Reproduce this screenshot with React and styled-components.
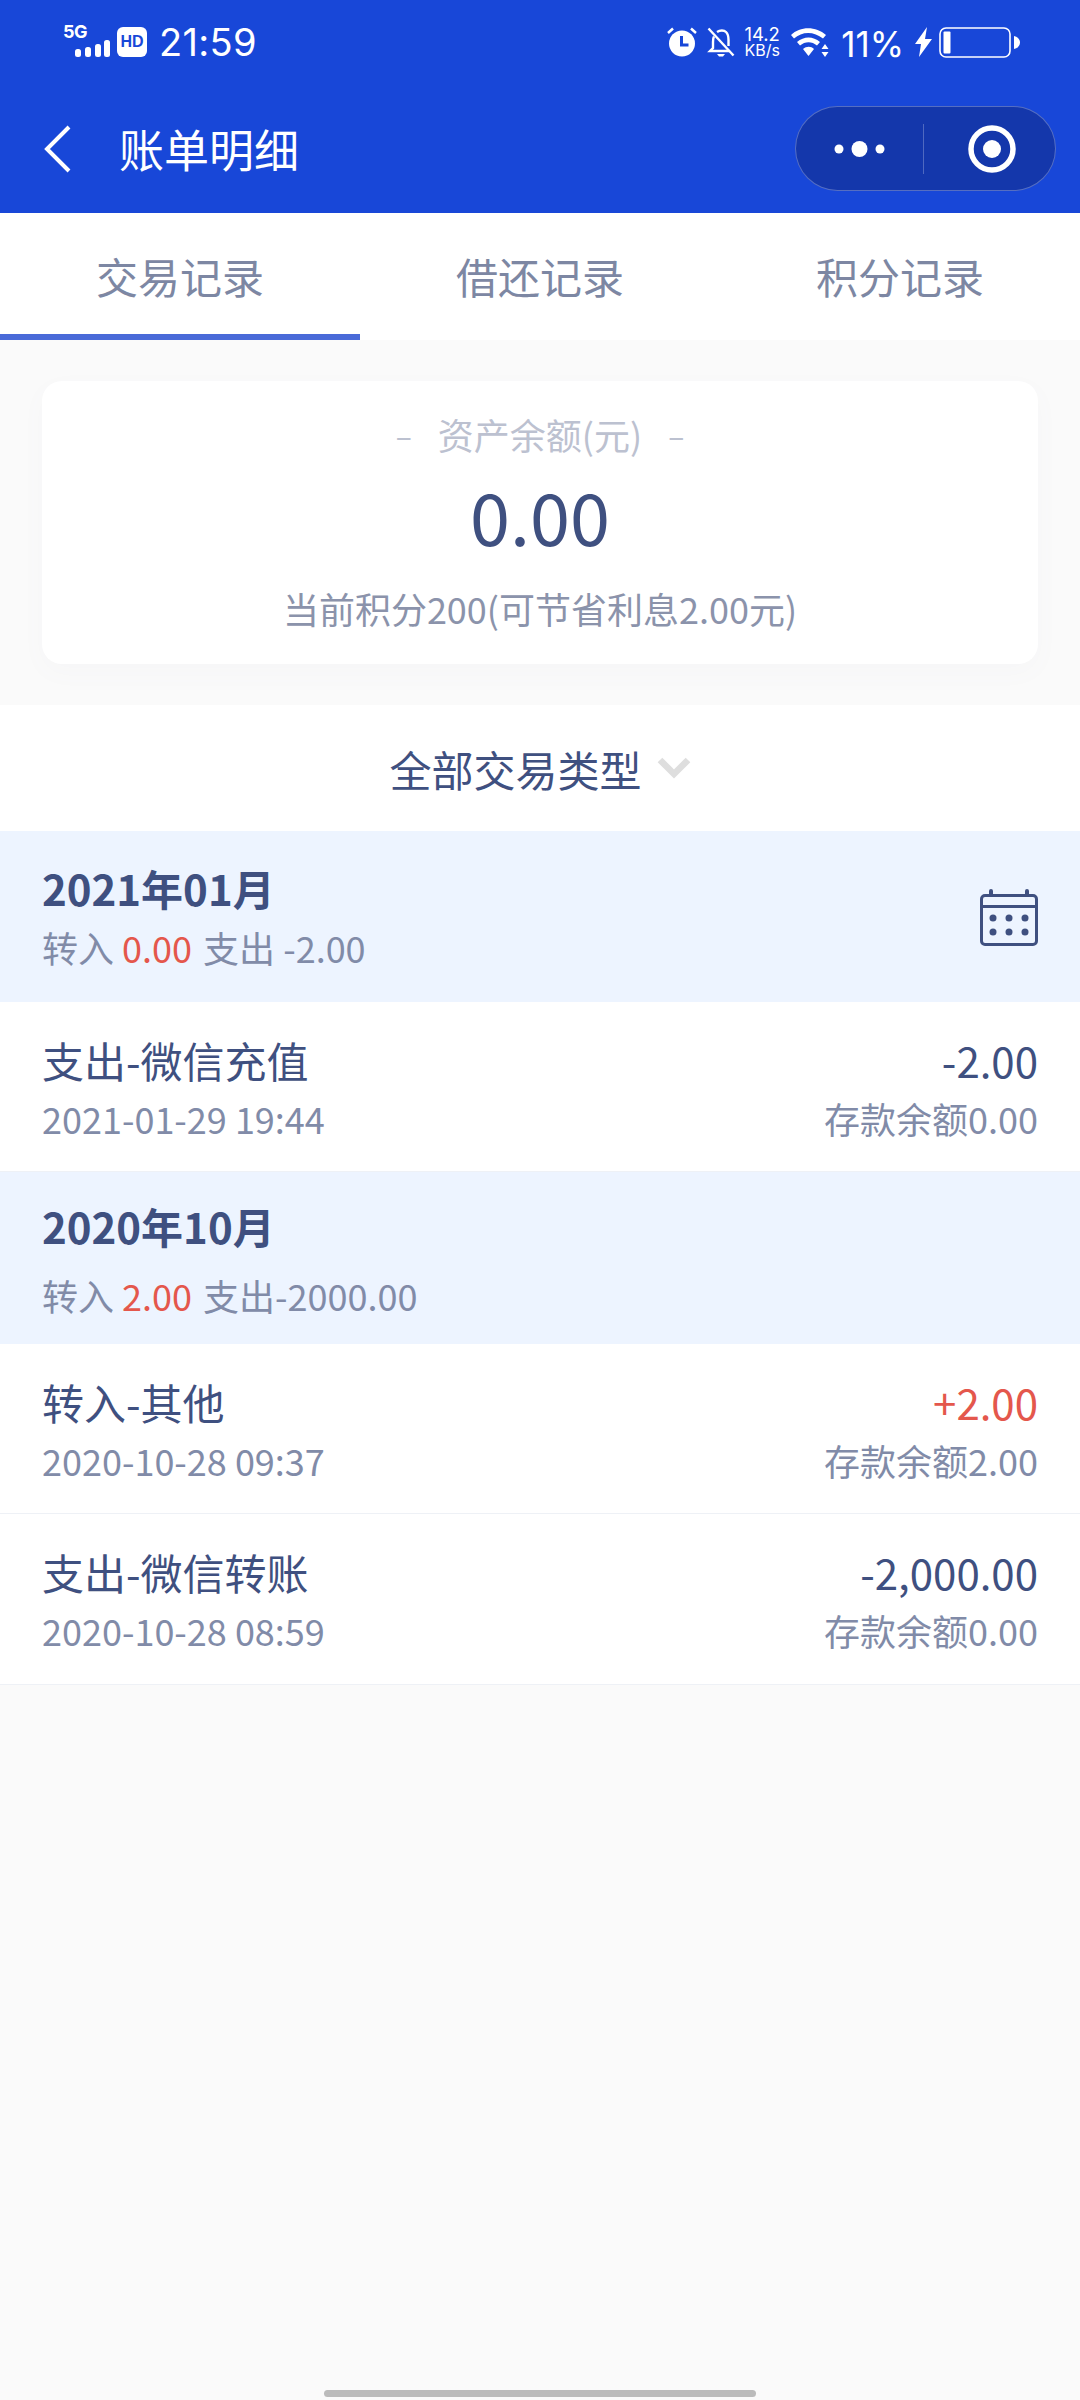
import React from "react";
import styled, { createGlobalStyle } from "styled-components";

const Global = createGlobalStyle`
  html, body { margin: 0; padding: 0; background: #fafafa; }
  body { font-family: "Noto Sans CJK SC", "Noto Sans", sans-serif; }
  * { box-sizing: border-box; }
`;

const Page = styled.div`
  width: 1080px;
  height: 2400px;
  display: flex;
  flex-direction: column;
  background: #fafafa;
  position: relative;
  overflow: hidden;
`;

const Header = styled.header`
  height: 213px;
  background: #1847d8;
  color: #fff;
  display: flex;
  flex-direction: column;
`;

const StatusBar = styled.div`
  height: 84px;
  padding: 27px 60px 0 63px;
  display: flex;
  justify-content: space-between;
  align-items: flex-start;
`;

const StatusGroup = styled.div`
  display: flex;
  align-items: flex-start;
`;

const Time = styled.span`
  font-family: Inter, sans-serif;
  font-size: 38px;
  line-height: 36px;
  margin: -3px 0 0 12px;
  letter-spacing: 0.3px;
`;

const Signal = styled.div`
  position: relative;
  width: 48px;
  height: 32px;
`;

const FiveG = styled.span`
  position: absolute;
  left: 0;
  top: -5px;
  font-family: Inter, sans-serif;
  font-weight: 700;
  font-size: 18px;
  letter-spacing: -0.5px;
  line-height: 20px;
`;

const HdBadge = styled.span`
  width: 30px;
  height: 30px;
  margin: 0 0 0 6px;
  border-radius: 6px;
  background: #fff;
  color: #1847d8;
  display: flex;
  align-items: center;
  justify-content: center;
  font-family: "Liberation Sans", sans-serif;
  font-weight: 700;
  font-size: 16px;
`;

const Speed = styled.div`
  width: 38px;
  margin: -2px 10px 0 8px;
  display: flex;
  flex-direction: column;
  align-items: center;
  font-family: Inter, sans-serif;
`;

const SpeedValue = styled.span`
  font-size: 18.500px;
  line-height: 18px;
`;

const SpeedUnit = styled.span`
  font-size: 16px;
  line-height: 15px;
  white-space: nowrap;
`;

const Percent = styled.span`
  font-family: Inter, sans-serif;
  font-size: 35px;
  line-height: 36px;
  margin: -1.500px 11px 0 10px;
`;

const NavBar = styled.div`
  flex: 1;
  display: flex;
  align-items: center;
  padding: 0 24px 0 44px;
`;

const Title = styled.h1`
  flex: 1;
  margin: 0 0 0 47px;
  font-size: 45px;
  font-weight: 400;
  line-height: 60px;
`;

const Capsule = styled.div`
  width: 261px;
  height: 85px;
  border-radius: 43px;
  background: #1437ab;
  border: 1.5px solid rgba(255, 255, 255, 0.28);
  display: flex;
  align-items: center;
`;

const CapsuleSide = styled.div`
  flex: 1;
  height: 50px;
  display: flex;
  align-items: center;
  justify-content: center;
  & + & {
    border-left: 1px solid rgba(255, 255, 255, 0.25);
    padding-left: 4px;
  }
`;

const Tabs = styled.nav`
  height: 127px;
  background: #fff;
  display: grid;
  grid-template-columns: repeat(3, 1fr);
`;

const Tab = styled.div`
  display: flex;
  align-items: center;
  justify-content: center;
  padding-top: 3px;
  font-size: 42px;
  color: #7d87a3;
  border-bottom: 6px solid ${(p) => (p.$active ? "#4a6ad8" : "transparent")};
`;

const CardArea = styled.section`
  padding: 41px 42px 41px;
`;

const Card = styled.div`
  height: 283px;
  border-radius: 20px;
  background: #fff;
  box-shadow: 0 8px 24px rgba(120, 130, 160, 0.03);
  display: flex;
  flex-direction: column;
  align-items: center;
  padding-top: 29px;
`;

const CardLabel = styled.div`
  font-size: 36px;
  line-height: 48px;
  color: #bcc1d0;
  display: flex;
  align-items: center;
  gap: 26px;
`;

const CardDash = styled.span`
  font-size: 30px;
`;

const CardAmount = styled.div`
  font-size: 72px;
  line-height: 92px;
  margin-top: 11px;
  color: #3f5080;
`;

const CardNote = styled.div`
  font-size: 36px;
  line-height: 48px;
  margin-top: 23px;
  color: #8b93ab;
`;

const Filter = styled.div`
  height: 126px;
  background: #fff;
  display: flex;
  align-items: center;
  justify-content: center;
  gap: 15px;
  font-size: 42px;
  color: #3f5080;
`;

const Month = styled.div`
  height: ${(p) => p.$h}px;
  background: #edf4ff;
  padding: 0 42px ${(p) => p.$pb}px;
  display: flex;
  align-items: center;
  justify-content: space-between;
`;

const MonthInfo = styled.div`
  display: flex;
  flex-direction: column;
  gap: ${(p) => p.$gap}px;
`;

const MonthTitle = styled.div`
  font-size: 42px;
  line-height: 56px;
  font-weight: 700;
  color: #3f5080;
`;

const MonthSummary = styled.div`
  font-size: 36px;
  line-height: 48px;
  color: #818ba8;
`;

const Red = styled.span`
  color: #e4574c;
  margin-right: 3px;
`;

const Row = styled.div`
  height: ${(p) => p.$h}px;
  background: #fff;
  padding: 0 42px;
  display: flex;
  align-items: center;
  justify-content: space-between;
  border-bottom: 1px solid #eef1f6;
`;

const RowSide = styled.div`
  display: flex;
  flex-direction: column;
  gap: 6px;
  align-items: ${(p) => (p.$end ? "flex-end" : "flex-start")};
`;

const RowTitle = styled.div`
  font-size: 42px;
  line-height: 56px;
  color: ${(p) => (p.$red ? "#e4574c" : "#3f5080")};
`;

const RowSub = styled.div`
  font-size: 36px;
  line-height: 48px;
  color: #818ba8;
`;

const HomeBar = styled.div`
  position: absolute;
  left: 324px;
  bottom: 3px;
  width: 432px;
  height: 7px;
  border-radius: 4px;
  background: #bbbbbb;
`;

const Alarm = () => (
  <svg width="30" height="30" viewBox="0 0 30 30" style={{ display: "block" }}>
    <circle cx="15" cy="16.5" r="13" fill="#fff" />
    <path d="M14.5 9v9h7" fill="none" stroke="#1847d8" strokeWidth="3" />
    <path d="M1 6l5-4.5M29 6l-5-4.5" stroke="#fff" strokeWidth="2.5" />
  </svg>
);

const MuteBell = () => (
  <svg width="28" height="30" viewBox="0 0 28 30" fill="none" stroke="#fff" strokeWidth="2.4" style={{ display: "block", marginLeft: 10 }}>
    <path d="M7 9.5C6 11 6 13 6 15v6l-3 3h19" />
    <path d="M10 5c3-2 7-2 9 0 2 2 2.500 5 2.500 8v6" />
    <path d="M1.500 1.500L26.500 28.500" />
    <path d="M10 27h8l-2 2.500h-4z" fill="#fff" stroke="none" />
  </svg>
);

const Wifi = () => (
  <svg width="40" height="30" viewBox="0 0 40 30" style={{ display: "block" }}>
    <path d="M0 8C9 -1 25 -1 35 8l-3 3.500C23 4 11 4 3 11.500z" fill="#fff" />
    <path d="M6 15c7-6 16-6 23 0l-3 3.500c-5-4.500-12-4.500-17 0z" fill="#fff" />
    <path d="M12 22c3.500-3 8-3 11 0l-5.500 7z" fill="#fff" />
    <path d="M34 17l3.500 5h-7zM34 30l3.500-5h-7z" fill="#fff" />
  </svg>
);

const Bolt = () => (
  <svg width="17" height="30" viewBox="0 0 17 30" style={{ display: "block" }}>
    <path d="M12 0L0 17h6L4 30 17 12h-7z" fill="#fff" />
  </svg>
);

const Battery = () => (
  <svg width="81" height="32" viewBox="0 0 81 32" style={{ display: "block", marginLeft: 7 }}>
    <rect x="1" y="1" width="70" height="29" rx="6" fill="none" stroke="#fff" strokeWidth="1.6" />
    <rect x="4.500" y="4.500" width="7" height="22" rx="1" fill="#fff" />
    <path d="M75 9c4 1 6 3.500 6 6.500s-2 5.500-6 6.500z" fill="#fff" />
  </svg>
);

const SignalBars = () => (
  <svg width="36" height="18" viewBox="0 0 36 18" style={{ position: "absolute", left: 12, top: 13 }}>
    <rect x="0" y="9" width="6" height="8" rx="2.500" fill="#fff" />
    <rect x="10" y="7" width="6" height="10" rx="2.500" fill="#fff" />
    <rect x="20" y="4" width="6" height="13" rx="2.500" fill="#fff" />
    <rect x="29" y="0" width="6" height="17" rx="2.500" fill="#fff" />
  </svg>
);

const Back = () => (
  <svg width="28" height="48" viewBox="0 0 28 48" style={{ display: "block" }}>
    <path d="M25 2L3 24l22 22" fill="none" stroke="#fff" strokeWidth="4" />
  </svg>
);

const Dots = () => (
  <svg width="52" height="20" viewBox="0 0 52 20" style={{ display: "block" }}>
    <circle cx="5" cy="10" r="4.500" fill="#fff" />
    <circle cx="25.500" cy="10" r="8" fill="#fff" />
    <circle cx="46" cy="10" r="4.500" fill="#fff" />
  </svg>
);

const Target = () => (
  <svg width="48" height="48" viewBox="0 0 48 48" style={{ display: "block" }}>
    <circle cx="24" cy="24" r="21" fill="none" stroke="#fff" strokeWidth="5.500" />
    <circle cx="24" cy="24" r="9" fill="#fff" />
  </svg>
);

const Chevron = () => (
  <svg width="34" height="22" viewBox="0 0 34 22" style={{ display: "block" }}>
    <path d="M3 3l14 14L31 3" fill="none" stroke="#dedede" strokeWidth="6.500" />
  </svg>
);

const Calendar = () => (
  <svg width="58" height="58" viewBox="0 0 58 58" style={{ display: "block", marginTop: 6 }}>
    <g fill="none" stroke="#3f5080" strokeWidth="3">
      <rect x="1.500" y="6.500" width="55" height="49" rx="3.500" />
      <path d="M1.500 17.500h55" />
    </g>
    <path d="M11 6V2M47 6V2" stroke="#3f5080" strokeWidth="4" strokeLinecap="round" />
    <g fill="#3f5080">
      {[13, 29, 45].flatMap((x) =>
        [29, 43].map((y) => <circle key={`${x}-${y}`} cx={x} cy={y} r="3.500" />)
      )}
    </g>
  </svg>
);

export default function App() {
  return (
    <Page>
      <Global />
      <Header>
        <StatusBar>
          <StatusGroup>
            <Signal>
              <FiveG>5G</FiveG>
              <SignalBars />
            </Signal>
            <HdBadge>HD</HdBadge>
            <Time>21:59</Time>
          </StatusGroup>
          <StatusGroup>
            <Alarm />
            <MuteBell />
            <Speed>
              <SpeedValue>14.2</SpeedValue>
              <SpeedUnit>KB/s</SpeedUnit>
            </Speed>
            <Wifi />
            <Percent>11%</Percent>
            <Bolt />
            <Battery />
          </StatusGroup>
        </StatusBar>
        <NavBar>
          <Back />
          <Title>账单明细</Title>
          <Capsule>
            <CapsuleSide><Dots /></CapsuleSide>
            <CapsuleSide><Target /></CapsuleSide>
          </Capsule>
        </NavBar>
      </Header>
      <Tabs>
        <Tab $active>交易记录</Tab>
        <Tab>借还记录</Tab>
        <Tab>积分记录</Tab>
      </Tabs>
      <CardArea>
        <Card>
          <CardLabel>
            <CardDash>–</CardDash>
            <span>资产余额(元)</span>
            <CardDash>–</CardDash>
          </CardLabel>
          <CardAmount>0.00</CardAmount>
          <CardNote>当前积分200(可节省利息2.00元)</CardNote>
        </Card>
      </CardArea>
      <Filter>
        全部交易类型
        <Chevron />
      </Filter>
      <Month $h={171} $pb={3}>
        <MonthInfo $gap={7}>
          <MonthTitle>2021年01月</MonthTitle>
          <MonthSummary>转入 <Red>0.00</Red> 支出 -2.00</MonthSummary>
        </MonthInfo>
        <Calendar />
      </Month>
      <Row $h={170}>
        <RowSide>
          <RowTitle>支出-微信充值</RowTitle>
          <RowSub>2021-01-29 19:44</RowSub>
        </RowSide>
        <RowSide $end>
          <RowTitle>-2.00</RowTitle>
          <RowSub>存款余额0.00</RowSub>
        </RowSide>
      </Row>
      <Month $h={172} $pb={0}>
        <MonthInfo $gap={17}>
          <MonthTitle>2020年10月</MonthTitle>
          <MonthSummary>转入 <Red>2.00</Red> 支出-2000.00</MonthSummary>
        </MonthInfo>
      </Month>
      <Row $h={170}>
        <RowSide>
          <RowTitle>转入-其他</RowTitle>
          <RowSub>2020-10-28 09:37</RowSub>
        </RowSide>
        <RowSide $end>
          <RowTitle $red>+2.00</RowTitle>
          <RowSub>存款余额2.00</RowSub>
        </RowSide>
      </Row>
      <Row $h={171}>
        <RowSide>
          <RowTitle>支出-微信转账</RowTitle>
          <RowSub>2020-10-28 08:59</RowSub>
        </RowSide>
        <RowSide $end>
          <RowTitle>-2,000.00</RowTitle>
          <RowSub>存款余额0.00</RowSub>
        </RowSide>
      </Row>
      <HomeBar />
    </Page>
  );
}
